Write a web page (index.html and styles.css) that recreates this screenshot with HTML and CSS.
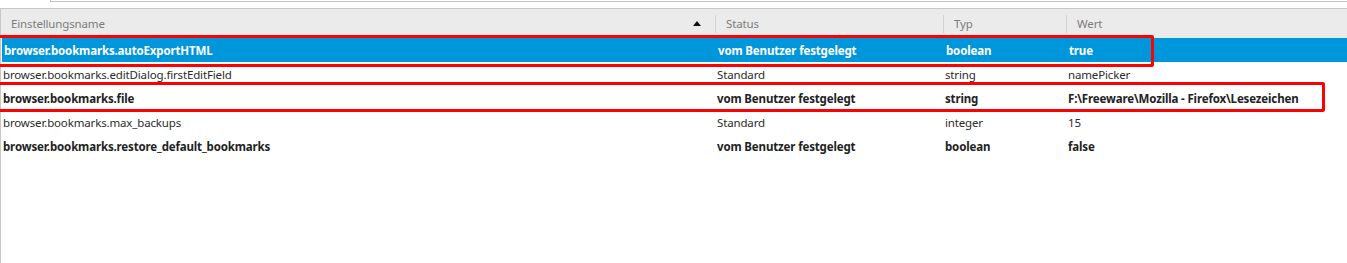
FILE: index.html
```html
<!DOCTYPE html>
<html lang="de">
<head>
    <meta charset="UTF-8">
    <title>about:config</title>
    <link rel="stylesheet" href="styles.css">
</head>
<body>
    <div class="search-edge"></div>
    <div class="prefs">
        <div class="head">
            <div class="col sorted">Einstellungsname <span class="arrow"></span></div>
            <div class="col">Status</div>
            <div class="col">Typ</div>
            <div class="col">Wert</div>
        </div>
        <div class="rows">
            <div class="row user selected">
                <div class="cell">browser.bookmarks.autoExportHTML</div>
                <div class="cell">vom Benutzer festgelegt</div>
                <div class="cell">boolean</div>
                <div class="cell">true</div>
            </div>
            <div class="row">
                <div class="cell">browser.bookmarks.editDialog.firstEditField</div>
                <div class="cell">Standard</div>
                <div class="cell">string</div>
                <div class="cell">namePicker</div>
            </div>
            <div class="row user">
                <div class="cell">browser.bookmarks.file</div>
                <div class="cell">vom Benutzer festgelegt</div>
                <div class="cell">string</div>
                <div class="cell">F:\Freeware\Mozilla - Firefox\Lesezeichen</div>
            </div>
            <div class="row">
                <div class="cell">browser.bookmarks.max_backups</div>
                <div class="cell">Standard</div>
                <div class="cell">integer</div>
                <div class="cell">15</div>
            </div>
            <div class="row user">
                <div class="cell">browser.bookmarks.restore_default_bookmarks</div>
                <div class="cell">vom Benutzer festgelegt</div>
                <div class="cell">boolean</div>
                <div class="cell">false</div>
            </div>

            <!-- red marks drawn over the screenshot -->
            <div class="mark mark-one"></div>
            <div class="mark mark-two"></div>
        </div>
    </div>
</body>
</html>
```

FILE: styles.css
```css
body {
    margin: 0;
    background-color: #ffffff;
    font-family: "Noto Sans", "Open Sans", sans-serif;
    font-size: 11.5px;
    letter-spacing: -0.15px;
    color: #2b2b2b;
    height: 263px;
    overflow: hidden;
}
.search-edge {
    margin-left: 50px;
    height: 1px;
    border-left: 1px solid #c4c4c4;
    border-bottom: 1px solid #c4c4c4;
    margin-bottom: 6px;
}
.prefs {
    border-top: 1px solid #c8c8c8;
    border-left: 1px solid #c8c8c8;
    height: 254px;
}
.head,
.row {
    display: grid;
    grid-template-columns: 714px 228px 123px 1fr;
}
.head {
    height: 29px;
    background-color: #ebebeb;
    color: #7c7c7c;
    align-items: center;
}
.head .col {
    padding-left: 10px;
    border-left: 1px solid #d2d2d2;
    line-height: 18px;
    position: relative;
}
.head .col:first-child {
    border-left: none;
}
.arrow {
    position: absolute;
    right: 14px;
    top: 6px;
    width: 0;
    height: 0;
    border-left: 4px solid transparent;
    border-right: 4px solid transparent;
    border-bottom: 5px solid #111111;
}
.rows {
    position: relative;
}
.row {
    height: 24px;
    align-items: center;
}
.cell {
    padding-left: 2px;
    white-space: nowrap;
}
.user {
    font-weight: bold;
    color: #222222;
}
.selected {
    background-color: #0096db;
    color: #ffffff;
    margin-left: 1px;
}
.mark {
    position: absolute;
    border: 3px solid #ff0000;
    border-radius: 2px;
}
.mark-one {
    left: -4px;
    top: -3px;
    width: 1151px;
    height: 26px;
}
.mark-two {
    left: -4px;
    top: 44px;
    width: 1322px;
    height: 24px;
}
```
